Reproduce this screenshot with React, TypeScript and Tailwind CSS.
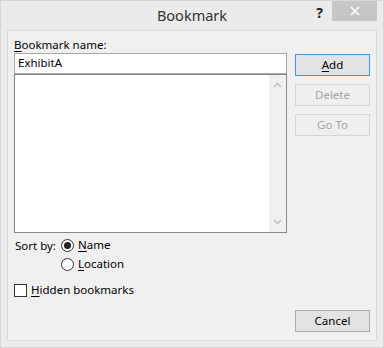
import React from "react";

const font = { fontFamily: '"Noto Sans", "Segoe UI", Arial, sans-serif' };

function U({ c }: { c: string }) {
  return <span className="underline underline-offset-[2px]">{c}</span>;
}

export default function App() {
  return (
    <div
      className="w-[384px] h-[348px] bg-[#ebebeb] border border-[#d6d6d6] flex flex-col text-[11.5px] text-black"
      style={font}
    >
      {/* title bar */}
      <div className="h-[29px] grid grid-cols-[1fr_auto_1fr] items-start">
        <div />
        <div className="pt-[4px] text-[14.5px] leading-[20px] text-[#333]">Bookmark</div>
        <div className="flex justify-end items-start">
          <div className="mt-[4px] mr-[9px] text-[14px] font-bold leading-[16px] text-[#222]">?</div>
          <div className="w-[45px] h-[20px] bg-[#c6c6c6] flex items-center justify-center mr-[6px]">
            <svg width="10" height="10" viewBox="0 0 10 10">
              <path d="M1 1 L9 9 M9 1 L1 9" stroke="#fff" strokeWidth="1.6" />
            </svg>
          </div>
        </div>
      </div>
      {/* panel */}
      <div className="ml-[6px] mr-[6px] h-[311px] border border-[#dadada] bg-[#f0f0f0] flex pl-[6px] pr-[6px] pb-[8px]">
        <div className="w-[273px] flex flex-col pt-[6px]">
          <div className="leading-[16px]">
            <U c="B" />ookmark name:
          </div>
          <div className="mt-[0px] h-[21px] border border-[#a9a9a9] bg-white px-[3px] leading-[18px]">ExhibitA</div>
          <div className="h-[159px] border border-[#828790] bg-white flex justify-end">
            <div className="w-[17px] bg-[#f0f0f0] flex flex-col items-center justify-between py-[7px]">
              <svg width="9" height="6" viewBox="0 0 9 6">
                <path d="M1 5 L4.5 1.5 L8 5" stroke="#c2c2c2" strokeWidth="1.6" fill="none" />
              </svg>
              <svg width="9" height="6" viewBox="0 0 9 6">
                <path d="M1 1 L4.5 4.5 L8 1" stroke="#c2c2c2" strokeWidth="1.6" fill="none" />
              </svg>
            </div>
          </div>
          <div className="flex mt-[3px]">
            <div className="w-[47px] pl-[1px] leading-[16px] pt-[2px]">Sort by:</div>
            <div className="flex flex-col gap-[2px]">
              <div className="flex items-center h-[18px]">
                <div className="w-[13px] h-[13px] rounded-full border border-[#333] bg-white flex items-center justify-center">
                  <div className="w-[7px] h-[7px] rounded-full bg-[#222]" />
                </div>
                <span className="ml-[4px]">
                  <U c="N" />ame
                </span>
              </div>
              <div className="flex items-center h-[16px]">
                <div className="w-[13px] h-[13px] rounded-full border border-[#333] bg-white" />
                <span className="ml-[4px]">
                  <U c="L" />ocation
                </span>
              </div>
            </div>
          </div>
          <div className="flex items-center mt-[10px] h-[16px]">
            <div className="w-[13px] h-[13px] border border-[#333] bg-white" />
            <span className="ml-[4px]">
              <U c="H" />idden bookmarks
            </span>
          </div>
        </div>
        <div className="ml-[8px] w-[75px] flex flex-col pt-[23px]">
          <div className="h-[22px] border border-[#3c97f0] bg-[#e3e3e3] flex items-center justify-center">
            <span>
              <U c="A" />dd
            </span>
          </div>
          <div className="mt-[8px] h-[22px] border border-[#d5d5d5] bg-[#efefef] flex items-center justify-center text-[#a6a6a6]">
            Delete
          </div>
          <div className="mt-[8px] h-[22px] border border-[#d5d5d5] bg-[#efefef] flex items-center justify-center text-[#a6a6a6]">
            Go To
          </div>
          <div className="mt-auto h-[22px] border border-[#adadad] bg-[#e3e3e3] flex items-center justify-center">
            Cancel
          </div>
        </div>
      </div>
    </div>
  );
}
